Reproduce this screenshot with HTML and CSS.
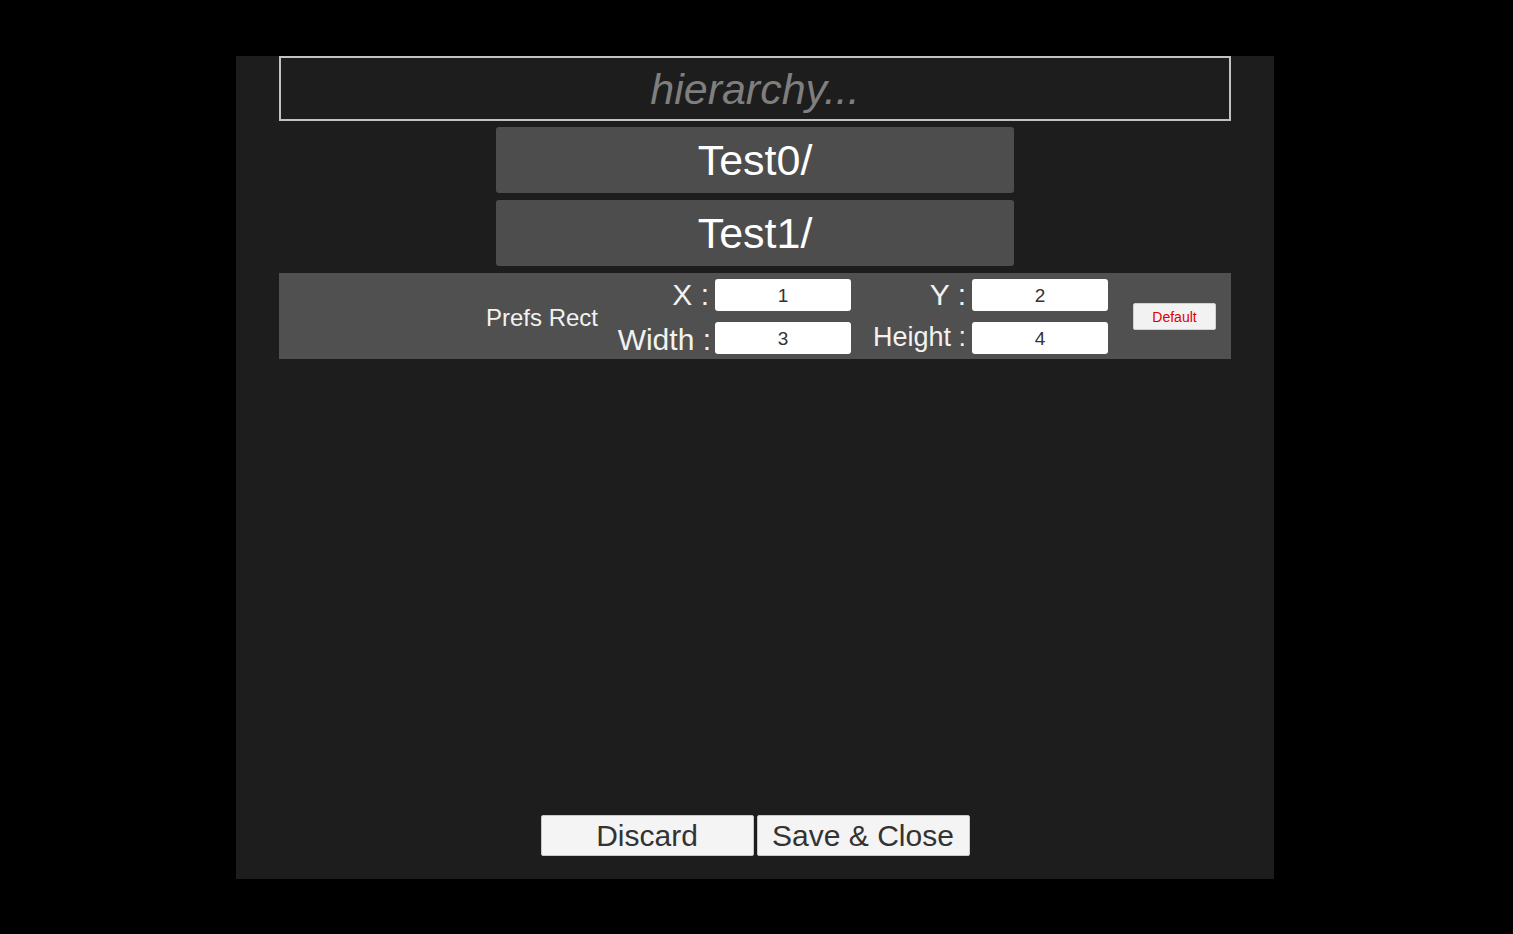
FILE: index.html
```html
<!DOCTYPE html>
<html>
<head>
<meta charset="utf-8">
<link rel="stylesheet" href="styles.css">
</head>
<body>
<div class="panel">
  <div class="search">hierarchy...</div>
  <div class="folders">
    <div class="folder">Test0/</div>
    <div class="folder">Test1/</div>
  </div>
  <div class="prefs">
    <div class="prefs-label">Prefs Rect</div>
    <div class="prefs-grid">
      <div class="lbl lbl-top">X :</div>
      <div class="field">1</div>
      <div class="lbl lbl-top">Y :</div>
      <div class="field">2</div>
      <div class="lbl lbl-bottom">Width :</div>
      <div class="field">3</div>
      <div class="lbl lbl-bottom lbl-small">Height :</div>
      <div class="field">4</div>
    </div>
    <div class="default-btn">Default</div>
  </div>
  <div class="actions">
    <div class="action">Discard</div>
    <div class="action">Save &amp; Close</div>
  </div>
</div>
</body>
</html>
```

FILE: styles.css
```css
html, body {
  margin: 0;
  padding: 0;
  background: #000;
  font-family: "Liberation Sans", Arial, sans-serif;
}

body {
  width: 1513px;
  height: 934px;
  overflow: hidden;
}

.panel {
  margin: 56px 0 0 236px;
  width: 1038px;
  height: 823px;
  box-sizing: border-box;
  padding: 0 43px 23px;
  background: #1d1d1d;
  display: flex;
  flex-direction: column;
}

.search {
  height: 65px;
  box-sizing: border-box;
  border: 2px solid #c2c2c2;
  display: flex;
  align-items: center;
  justify-content: center;
  font-style: italic;
  font-size: 43px;
  color: #7f7f7f;
  padding-top: 2px;
}

.folders {
  margin-top: 6px;
  display: flex;
  flex-direction: column;
  align-items: center;
  gap: 7px;
}

.folder {
  width: 518px;
  height: 66px;
  background: #4d4d4d;
  border-radius: 3px;
  color: #fff;
  font-size: 43px;
  display: flex;
  align-items: center;
  justify-content: center;
  padding-top: 1px;
  box-sizing: border-box;
}

.prefs {
  margin-top: 7px;
  height: 86px;
  background: #505050;
  display: flex;
  align-items: center;
}

.prefs-label {
  width: 319px;
  text-align: right;
  color: #f2f2f2;
  font-size: 24px;
  flex: none;
  padding-top: 3px;
}

.prefs-grid {
  display: grid;
  grid-template-columns: 117px 136px 121px 136px;
  grid-template-rows: 32px 32px;
  row-gap: 11px;
  align-items: center;
}

.lbl {
  color: #f2f2f2;
  font-size: 30px;
  text-align: right;
  padding-right: 6px;
  line-height: 32px;
}

.lbl-bottom {
  position: relative;
  top: 2px;
  padding-right: 4px;
}

.lbl-small {
  font-size: 27px;
  top: -1px;
  padding-right: 6px;
}

.field {
  height: 32px;
  background: #fff;
  border-radius: 3px;
  display: flex;
  align-items: center;
  justify-content: center;
  font-size: 19px;
  color: #333;
  padding-top: 2px;
  box-sizing: border-box;
}

.default-btn {
  margin-left: 25px;
  width: 83px;
  height: 27px;
  box-sizing: border-box;
  background: #f2f2f2;
  border: 1px solid #d0d0d0;
  border-radius: 2px;
  color: #e00000;
  font-size: 14px;
  display: flex;
  align-items: center;
  justify-content: center;
  padding-top: 1px;
}

.actions {
  margin-top: auto;
  display: flex;
  justify-content: center;
  gap: 3px;
}

.action {
  width: 213px;
  height: 41px;
  box-sizing: border-box;
  background: #f4f4f4;
  border: 1px solid #c8c8c8;
  border-radius: 2px;
  color: #333;
  font-size: 30px;
  display: flex;
  align-items: center;
  justify-content: center;
}
```
